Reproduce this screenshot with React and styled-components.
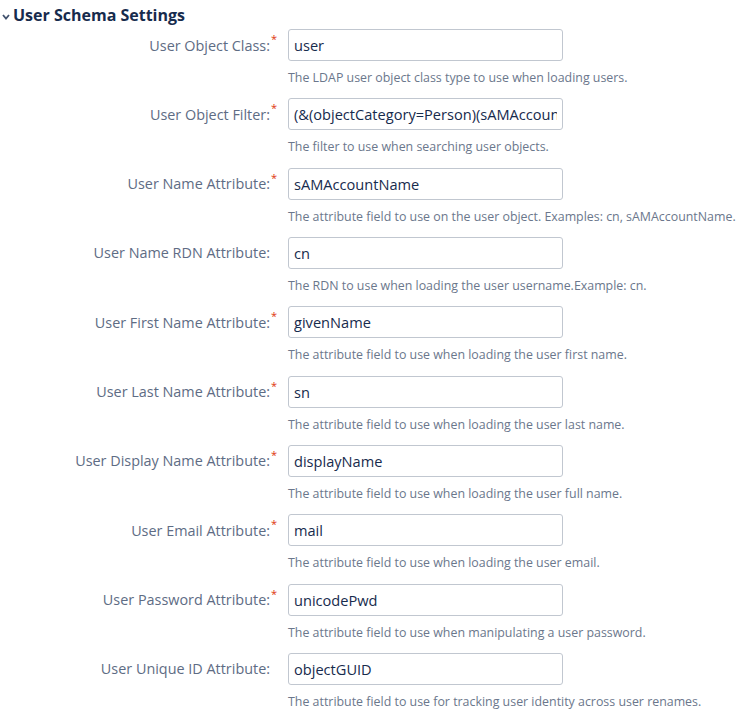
import styled, { createGlobalStyle } from 'styled-components';

const GlobalStyle = createGlobalStyle`
    body {
        margin: 0;
        background: #fff;
        font-family: "Open Sans", "Noto Sans", sans-serif;
        color: #172B4D;
    }
`

const Page = styled.main`
    width: 740px;
    overflow: hidden;
`

const SectionHeader = styled.h2`
    display: flex;
    align-items: center;
    gap: 3px;
    margin: 0;
    padding: 3px 0 0 2px;
    height: 23px;
    font-size: 16px;
    font-weight: 700;
    line-height: 22px;
    color: #172B4D;
`

const Chevron = () => (
    <svg width="8" height="6" viewBox="0 0 8 6" style={{ marginTop: 4 }}>
        <polyline points="1,1 4,4.5 7,1" fill="none" stroke="#42526E" strokeWidth="1.8" />
    </svg>
)

const Form = styled.div`
    display: flex;
    flex-direction: column;
    padding-top: 3px;
`

const Row = styled.div`
    display: grid;
    grid-template-columns: 288px 275px;
    grid-template-rows: 32px auto;
    row-gap: 9px;
    margin-bottom: 12.33px;
`

const LabelCell = styled.label`
    display: flex;
    justify-content: flex-end;
    align-items: center;
    padding-right: 11px;
    font-size: 14.4px;
    color: #5E6C84;
    white-space: nowrap;
`

const Required = styled.span`
    align-self: flex-start;
    width: 6px;
    margin-top: 6px;
    font-size: 11px;
    line-height: 8px;
    color: #DE350B;
    text-align: left;
    padding-left: 1px;
`

const Input = styled.input`
    box-sizing: border-box;
    width: 275px;
    height: 32px;
    padding: 0 5px;
    border: 1px solid #C1C7D0;
    border-radius: 3px;
    font-family: inherit;
    font-size: 14.6px;
    color: #172B4D;
    background: #fff;
    outline: none;
`

const Description = styled.div`
    grid-column: 2;
    font-size: 12.4px;
    line-height: 16px;
    color: #6B778C;
    white-space: nowrap;
`

const fields = [
    { label: 'User Object Class:', value: 'user', required: true, help: 'The LDAP user object class type to use when loading users.' },
    { label: 'User Object Filter:', value: '(&(objectCategory=Person)(sAMAccountName=*))', required: true, help: 'The filter to use when searching user objects.' },
    { label: 'User Name Attribute:', value: 'sAMAccountName', required: true, help: 'The attribute field to use on the user object. Examples: cn, sAMAccountName.' },
    { label: 'User Name RDN Attribute:', value: 'cn', required: false, help: 'The RDN to use when loading the user username.Example: cn.' },
    { label: 'User First Name Attribute:', value: 'givenName', required: true, help: 'The attribute field to use when loading the user first name.' },
    { label: 'User Last Name Attribute:', value: 'sn', required: true, help: 'The attribute field to use when loading the user last name.' },
    { label: 'User Display Name Attribute:', value: 'displayName', required: true, help: 'The attribute field to use when loading the user full name.' },
    { label: 'User Email Attribute:', value: 'mail', required: true, help: 'The attribute field to use when loading the user email.' },
    { label: 'User Password Attribute:', value: 'unicodePwd', required: true, help: 'The attribute field to use when manipulating a user password.' },
    { label: 'User Unique ID Attribute:', value: 'objectGUID', required: false, help: 'The attribute field to use for tracking user identity across user renames.' },
]

export default function App() {
    return (
        <>
            <GlobalStyle />
            <Page>
                <SectionHeader>
                    <Chevron />
                    User Schema Settings
                </SectionHeader>
                <Form>
                    {fields.map((f) => (
                        <Row key={f.label}>
                            <LabelCell>
                                {f.label}
                                <Required>{f.required ? '*' : ''}</Required>
                            </LabelCell>
                            <Input type="text" defaultValue={f.value} />
                            <Description>{f.help}</Description>
                        </Row>
                    ))}
                </Form>
            </Page>
        </>
    )
}
